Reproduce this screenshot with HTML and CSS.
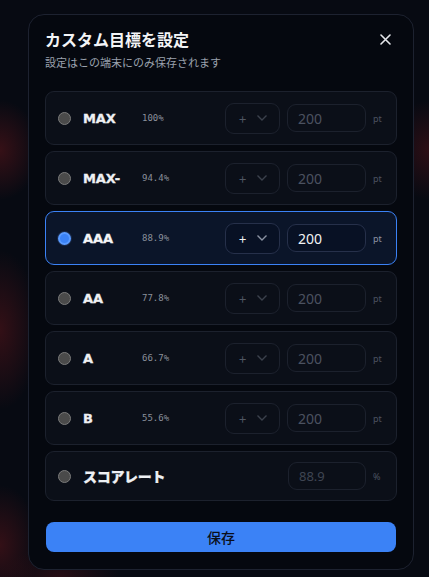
FILE: index.html
```html
<!DOCTYPE html>
<html lang="ja">
<head>
<meta charset="utf-8">
<link rel="stylesheet" href="styles.css">
</head>
<body>
<div class="modal">
  <div class="head">
    <h1 class="title">カスタム目標を設定</h1>
    <button class="close" aria-label="close">
      <svg width="11" height="11" viewBox="0 0 11 11"><path d="M1 1L10 10M10 1L1 10" stroke="#e5e7eb" stroke-width="1.6" stroke-linecap="round"/></svg>
    </button>
  </div>
  <p class="sub">設定はこの端末にのみ保存されます</p>

  <div class="list">
    <div class="row off">
      <span class="radio"></span><span class="label">MAX</span><span class="pct">100%</span>
      <div class="sel"><span>+</span><svg width="12" height="8" viewBox="0 0 12 8"><path d="M1.5 1.5L6 6L10.5 1.5" fill="none" stroke="currentColor" stroke-width="1.4"/></svg></div>
      <div class="inp">200</div><span class="unit">pt</span>
    </div>
    <div class="row off">
      <span class="radio"></span><span class="label">MAX-</span><span class="pct">94.4%</span>
      <div class="sel"><span>+</span><svg width="12" height="8" viewBox="0 0 12 8"><path d="M1.5 1.5L6 6L10.5 1.5" fill="none" stroke="currentColor" stroke-width="1.4"/></svg></div>
      <div class="inp">200</div><span class="unit">pt</span>
    </div>
    <div class="row on">
      <span class="radio"></span><span class="label">AAA</span><span class="pct">88.9%</span>
      <div class="sel"><span>+</span><svg width="12" height="8" viewBox="0 0 12 8"><path d="M1.5 1.5L6 6L10.5 1.5" fill="none" stroke="currentColor" stroke-width="1.4"/></svg></div>
      <div class="inp">200</div><span class="unit">pt</span>
    </div>
    <div class="row off">
      <span class="radio"></span><span class="label">AA</span><span class="pct">77.8%</span>
      <div class="sel"><span>+</span><svg width="12" height="8" viewBox="0 0 12 8"><path d="M1.5 1.5L6 6L10.5 1.5" fill="none" stroke="currentColor" stroke-width="1.4"/></svg></div>
      <div class="inp">200</div><span class="unit">pt</span>
    </div>
    <div class="row off">
      <span class="radio"></span><span class="label">A</span><span class="pct">66.7%</span>
      <div class="sel"><span>+</span><svg width="12" height="8" viewBox="0 0 12 8"><path d="M1.5 1.5L6 6L10.5 1.5" fill="none" stroke="currentColor" stroke-width="1.4"/></svg></div>
      <div class="inp">200</div><span class="unit">pt</span>
    </div>
    <div class="row off">
      <span class="radio"></span><span class="label">B</span><span class="pct">55.6%</span>
      <div class="sel"><span>+</span><svg width="12" height="8" viewBox="0 0 12 8"><path d="M1.5 1.5L6 6L10.5 1.5" fill="none" stroke="currentColor" stroke-width="1.4"/></svg></div>
      <div class="inp">200</div><span class="unit">pt</span>
    </div>
    <div class="row off rate">
      <span class="radio"></span><span class="label wide">スコアレート</span>
      <div class="inp rinp">88.9</div><span class="unit">%</span>
    </div>
  </div>

  <button class="save">保存</button>
</div>
</body>
</html>
```
FILE: styles.css
```css
* { box-sizing: border-box; }
html, body { margin: 0; height: 100%; }
body {
  background-color: #070a12;
  background-image:
    radial-gradient(ellipse 40px 50px at 0px 150px, rgba(70,18,24,0.75), transparent),
    radial-gradient(ellipse 40px 80px at 0px 330px, rgba(70,18,24,0.7), transparent),
    radial-gradient(ellipse 40px 60px at 0px 545px, rgba(70,18,24,0.7), transparent),
    radial-gradient(ellipse 40px 50px at 429px 150px, rgba(70,18,24,0.6), transparent),
    radial-gradient(ellipse 60px 30px at 60px 577px, rgba(60,16,22,0.6), transparent);
  font-family: "Noto Sans CJK JP", "Noto Sans", sans-serif;
  color: #f3f4f6;
  overflow: hidden;
}
.modal {
  margin: 14px 0 0 28px;
  width: 386px;
  height: 556px;
  background: #05080f;
  border: 1px solid #1d2230;
  border-radius: 16px;
  padding: 12px 16px 0 16px;
  display: flex;
  flex-direction: column;
}
.head { display: flex; align-items: center; justify-content: space-between; }
.title {
  margin: 0;
  font-size: 16px;
  font-weight: 700;
  line-height: 24px;
  color: #f3f4f6;
}
.close {
  background: none; border: 0; padding: 0; margin-right: 5px;
  display: flex; align-items: center; justify-content: center;
  width: 14px; height: 14px;
}
.sub {
  margin: 3px 0 0 0;
  font-size: 11px;
  line-height: 16px;
  color: #9aa1ad;
}
.list {
  margin-top: 21px;
  display: flex;
  flex-direction: column;
  gap: 6px;
}
.row {
  height: 54px;
  display: flex;
  align-items: center;
  padding: 0 11px 0 12px;
  background: #0b0f18;
  border: 1px solid #1c212d;
  border-radius: 9px;
}
.row.rate { height: 50px; }
.row.on {
  background: #0b1529;
  border-color: #3b82f6;
}
.radio {
  width: 13px; height: 13px;
  border-radius: 50%;
  background: #4a4a4a;
  border: 1px solid #7a7a7a;
  flex: none;
}
.row.on .radio {
  background: #3b82f6;
  border: 2px solid #5a9bff;
  box-shadow: 0 0 0 1px #1a2a4a;
}
.label {
  margin-left: 12px;
  width: 59px;
  font-family: "DejaVu Sans", sans-serif;
  font-weight: 700;
  font-size: 13px;
  letter-spacing: -0.1px;
  -webkit-text-stroke: 0.35px currentColor;
  color: #f3f4f6;
  flex: none;
}
.label.wide {
  width: auto;
  font-family: "Noto Sans CJK JP", sans-serif;
  font-weight: 900;
  font-size: 14px;
  letter-spacing: -0.3px;
  -webkit-text-stroke: 0.2px currentColor;
}
.pct {
  font-family: "DejaVu Sans Mono", monospace;
  font-size: 9px;
  color: #8a909b;
}
.sel {
  margin-left: auto;
  width: 55px; height: 31px;
  border: 1px solid #1c212d;
  border-radius: 9px;
  display: flex; align-items: center; justify-content: space-between;
  padding: 0 11px 0 13px;
  color: #6b7280;
  font-size: 13px;
}
.sel span { font-size: 13px; line-height: 1; }
.inp {
  margin-left: 7px;
  width: 79px; height: 28px;
  border: 1px solid #1c212d;
  border-radius: 9px;
  display: flex; align-items: center;
  padding-left: 10px;
  font-family: "Noto Sans", sans-serif;
  font-size: 14px;
  color: #4b5260;
}
.rinp { margin-left: auto; width: 78px; padding-left: 10px; font-size: 13px; color: #3f4552; }
.unit {
  margin-left: 7px;
  width: 12px;
  font-family: "Noto Sans", sans-serif;
  font-size: 9px;
  color: #4b5260;
}
.row.off .sel span { color: #4f5662; }
.row.off .sel svg { color: #3b414c; }
.row.on .sel { color: #f3f4f6; border-color: #26304a; background: #081124; }
.row.on .sel svg { color: #8b93a3; }
.row.on .inp { color: #f3f4f6; border-color: #26304a; background: #081124; }
.row.on .unit { color: #8b93a3; }
.row.off .label { color: #eef0f3; }
.save {
  margin-top: 21px;
  height: 30px;
  width: 350px;
  margin-left: 1px;
  border: 0;
  border-radius: 8px;
  background: #3b82f6;
  color: #0a0f1a;
  font-family: "Noto Sans CJK JP", sans-serif;
  font-size: 14px;
  font-weight: 500;
}
```
